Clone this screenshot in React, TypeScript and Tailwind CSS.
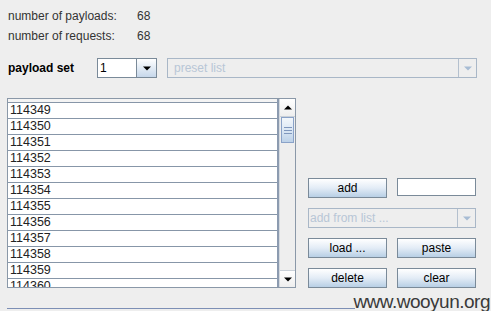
const rows = [
  "114349", "114350", "114351", "114352", "114353", "114354",
  "114355", "114356", "114357", "114358", "114359", "114360",
]

const Tri = ({ up = false, color = "#000" }: { up?: boolean; color?: string }) => (
  <svg width="8" height="5" viewBox="0 0 8 5">
    <polygon points={up ? "0,4.5 8,4.5 4,0.5" : "0,0.5 8,0.5 4,4.5"} fill={color} />
  </svg>
)

const Btn = ({ label }: { label: string }) => (
  <div className="w-[79px] h-[20px] border border-[#7a8a99] bg-gradient-to-b from-white via-[#e3ecf6] to-[#b8cfe5] flex items-center justify-center text-[12px] text-black">
    {label}
  </div>
)

const DisabledCombo = ({ label, w, pad }: { label: string; w: string; pad: string }) => (
  <div className={`${w} h-[20px] border border-[#a9b7c7] bg-[#eeeeee] flex`}>
    <div className={`flex-1 flex items-center ${pad} text-[12px] text-[#b8c6d6]`}>{label}</div>
    <div className="w-[18px] border-l border-[#b4c0ce] flex items-center justify-center">
      <Tri color="#a7bcd4" />
    </div>
  </div>
)

export default function App() {
  return (
    <div className="w-[491px] h-[311px] bg-[#eeeeee] pl-[7px] flex flex-col relative overflow-hidden font-['Liberation_Sans',Arial,sans-serif] text-[12px] text-[#333333]">
      <div className="mt-[9px] h-[14px] flex items-center pl-[1px]">
        <span className="w-[129px]">number of payloads:</span>
        <span>68</span>
      </div>
      <div className="mt-[6px] h-[14px] flex items-center pl-[1px]">
        <span className="w-[129px]">number of requests:</span>
        <span>68</span>
      </div>

      <div className="mt-[15px] h-[20px] flex items-center">
        <span className="w-[90px] pl-[1px] font-bold text-black">payload set</span>
        <div className="w-[60px] h-[20px] border border-[#7a8a99] flex bg-white">
          <div className="flex-1 flex items-center pl-[2px] text-black">1</div>
          <div className="w-[20px] border-l border-[#7a8a99] bg-gradient-to-b from-white to-[#c6d7ea] flex items-center justify-center">
            <Tri />
          </div>
        </div>
        <div className="ml-[10px]">
          <DisabledCombo label="preset list" w="w-[310px]" pad="pl-[6px]" />
        </div>
      </div>

      <div className="mt-[20px] h-[190px] flex">
        <div className="w-[289px] h-[190px] border border-[#8a98a8] flex bg-[#f4f4f4]">
          <div className="flex-1 pt-[3px] overflow-hidden border-r-2 border-[#8c9bb0]">
            {rows.map((r) => (
              <div key={r} className="h-[16px] border-t border-[#8796a8] bg-white pl-[2px] leading-[15px] text-[12.5px] text-[#222222]">
                {r}
              </div>
            ))}
          </div>
          <div className="w-[16px] flex flex-col bg-[#eeeeee] border-l border-[#d4d9df]">
            <div className="h-[18px] flex items-center justify-center border-b border-[#c9d0d8] bg-gradient-to-b from-white to-[#eeeeee]">
              <Tri up />
            </div>
            <div className="h-[26px] mx-[1px] border border-[#8aa2c8] bg-gradient-to-b from-[#f3f7fb] via-[#dbe7f4] to-[#bcd1e8] flex flex-col items-center justify-center gap-[2px]">
              <div className="w-[8px] h-px bg-[#7f97bd]" />
              <div className="w-[8px] h-px bg-[#7f97bd]" />
              <div className="w-[8px] h-px bg-[#7f97bd]" />
            </div>
            <div className="flex-1" />
            <div className="h-[17px] flex items-center justify-center border-t border-[#c9d0d8] bg-gradient-to-b from-white to-[#eeeeee]">
              <Tri />
            </div>
          </div>
        </div>

        <div className="ml-[12px] w-[168px] flex flex-col justify-end gap-[10px]">
          <div className="flex gap-[10px]">
            <Btn label="add" />
            <div className="w-[79px] h-[18px] border border-[#7a8a99] bg-white" />
          </div>
          <DisabledCombo label="add from list ..." w="w-[168px]" pad="pl-[1px]" />
          <div className="flex gap-[10px]">
            <Btn label="load ..." />
            <Btn label="paste" />
          </div>
          <div className="flex gap-[10px]">
            <Btn label="delete" />
            <Btn label="clear" />
          </div>
        </div>
      </div>

      <div className="mt-[20px] w-[348px] h-px bg-[#7d8fb5]" />

      <div className="absolute top-[292px] right-[1px] leading-[19px] text-[19px] tracking-[-0.5px] text-[#3a3a3a]">
        www.wooyun.org
      </div>
    </div>
  )
}
